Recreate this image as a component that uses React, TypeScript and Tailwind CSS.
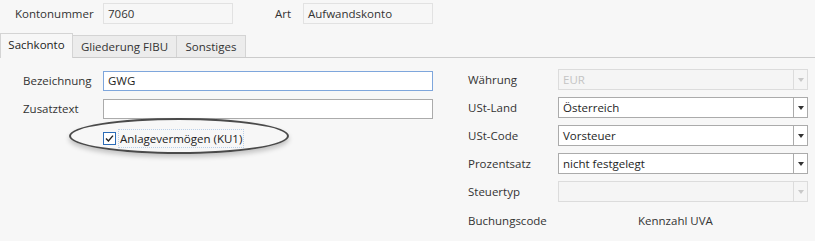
const font = { fontFamily: '"Segoe UI", "Open Sans", "Noto Sans", sans-serif' };

type SelectProps = { value?: string; disabled?: boolean };

// combo box like the WPF one: text field + separated arrow button
const Select = ({ value = "", disabled = false }: SelectProps) => (
  <div
    className={`flex h-[21px] w-[250px] items-stretch border ${
      disabled ? "border-[#dcdcdc] bg-[#f5f5f5] text-[#c4c4c4]" : "border-[#ababab] bg-white text-[#1e1e1e]"
    }`}
  >
    <div className="flex flex-1 items-center pl-[4px] leading-none">{value}</div>
    <div className={`flex w-[14px] items-center justify-center border-l ${disabled ? "border-[#dcdcdc]" : "border-[#ababab]"}`}>
      <div
        className={`h-0 w-0 border-x-[3.5px] border-t-[4px] border-x-transparent ${
          disabled ? "border-t-[#c8c8c8]" : "border-t-[#333]"
        }`}
      />
    </div>
  </div>
);

const RightRow = ({ label, children }: { label: string; children: React.ReactNode }) => (
  <div className="flex items-center">
    <div className="w-[90px] text-[#333]">{label}</div>
    {children}
  </div>
);

export default function App() {
  return (
    <div className="relative h-[241px] w-[815px] overflow-hidden bg-[#f7f7f7] text-[11.5px] text-[#333]" style={font}>
      {/* header fields */}
      <div className="flex items-center pt-[3px]">
        <div className="w-[103px] pl-[15px]">Kontonummer</div>
        <div className="flex h-[21px] w-[130px] items-center border border-[#e2e2e2] pl-[4px]">7060</div>
        <div className="w-[70px] pl-[42px]">Art</div>
        <div className="flex h-[21px] w-[130px] items-center border border-[#e2e2e2] pl-[4px]">Aufwandskonto</div>
      </div>

      {/* tabs */}
      <div className="mt-[9px] flex items-end border-b border-[#cccccc]">
        <div className="-mb-px flex h-[25px] w-[73px] items-center justify-center border-x border-t border-[#d4d4d4] bg-[#f7f7f7] pb-[2px] text-[#222]">
          Sachkonto
        </div>
        <div className="flex h-[22px] w-[104px] items-center justify-center border-r border-t border-[#d4d4d4] bg-[#ececec]">
          Gliederung FIBU
        </div>
        <div className="flex h-[22px] w-[69px] items-center justify-center border-r border-t border-[#d4d4d4] bg-[#ececec]">
          Sonstiges
        </div>
      </div>

      <div className="flex pt-[12px]">
        {/* left column */}
        <div className="flex w-[468px] flex-col pl-[23px]">
          <div className="mt-[1px] flex items-center">
            <div className="w-[80px]">Bezeichnung</div>
            <div className="flex h-[20px] w-[330px] items-center border border-[#7ea6dc] bg-white pl-[4px] text-[#1e1e1e]">GWG</div>
          </div>
          <div className="mt-[8px] flex items-center">
            <div className="w-[80px]">Zusatztext</div>
            <div className="h-[20px] w-[330px] border border-[#ababab] bg-white" />
          </div>
          <div className="mt-[10px] flex items-center pl-[80px]">
            <div className="flex h-[13px] w-[13px] items-center justify-center border border-[#2b6cb8] bg-white">
              <svg width="9" height="9" viewBox="0 0 9 9">
                <path d="M1 4.6 L3.4 7 L8 1.6" fill="none" stroke="#222" strokeWidth="1.4" />
              </svg>
            </div>
            <div className="ml-[2px] border border-dotted border-[#b9cfe8] px-[1px] leading-[17px] text-[#222]">
              Anlagevermögen (KU1)
            </div>
          </div>
        </div>

        {/* right column */}
        <div className="-mt-px flex flex-col gap-[7px]">
          <RightRow label="Währung">
            <Select value="EUR" disabled />
          </RightRow>
          <RightRow label="USt-Land">
            <Select value="Österreich" />
          </RightRow>
          <RightRow label="USt-Code">
            <Select value="Vorsteuer" />
          </RightRow>
          <RightRow label="Prozentsatz">
            <Select value="nicht festgelegt" />
          </RightRow>
          <RightRow label="Steuertyp">
            <Select disabled />
          </RightRow>
          <div className="mt-[3px] flex items-center">
            <div className="w-[170px]">Buchungscode</div>
            <div>Kennzahl UVA</div>
          </div>
        </div>
      </div>

      {/* hand-drawn highlight around the checkbox */}
      <div className="pointer-events-none absolute left-[69px] top-[118px] h-[36px] w-[220px] rounded-[50%] border-2 border-[#4a4a4a] shadow-[0_3px_5px_rgba(0,0,0,0.22)]" />
    </div>
  );
}
